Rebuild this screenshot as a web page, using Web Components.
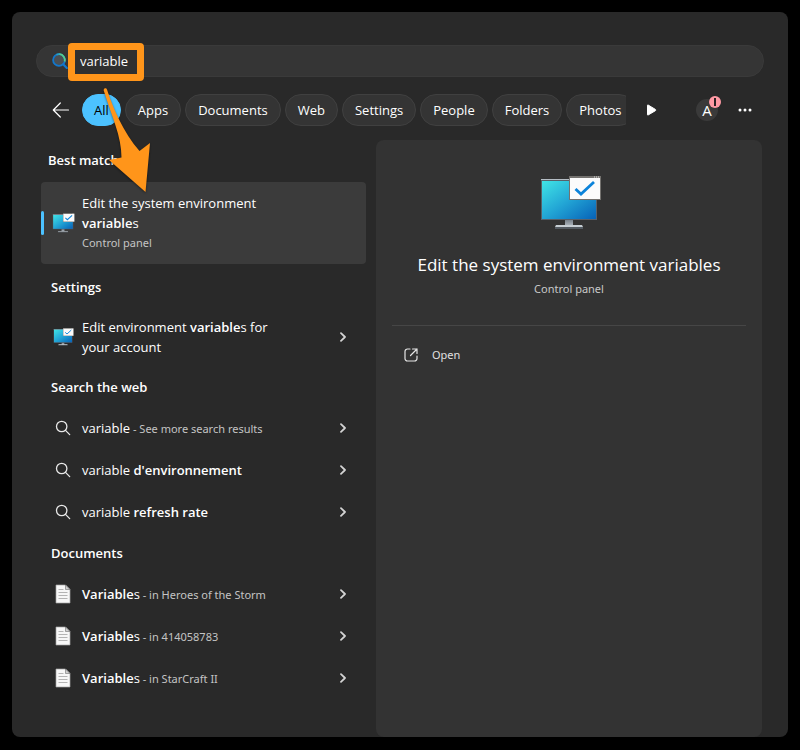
<!DOCTYPE html>
<html lang="en">
<head>
<meta charset="utf-8">
<meta name="viewport" content="width=device-width, initial-scale=1">
<title>Search</title>
<style>
  html { background: #000; }
  body {
    margin: 0;
    min-height: 100vh;
    box-sizing: border-box;
    padding: 12px 12px 13px;
    display: flex;
    background: #000;
    color: #fff;
    font: 13px/20px "Open Sans", "Noto Sans", sans-serif;
    --small-font: "Noto Sans", "Open Sans", sans-serif;
  }
</style>
</head>
<body>
<search-window>
  <search-box slot="search" value="variable"></search-box>
  <filter-bar slot="filters">
    <filter-pill selected>All</filter-pill>
    <filter-pill>Apps</filter-pill>
    <filter-pill>Documents</filter-pill>
    <filter-pill>Web</filter-pill>
    <filter-pill>Settings</filter-pill>
    <filter-pill>People</filter-pill>
    <filter-pill>Folders</filter-pill>
    <filter-pill>Photos</filter-pill>
  </filter-bar>

  <result-group slot="results" heading="Best match" best>
    <result-item icon="monitor" selected>Edit the system environment <b>variable</b>s<span slot="detail">Control panel</span></result-item>
  </result-group>
  <result-group slot="results" heading="Settings">
    <result-item icon="monitor" tall>Edit environment <b>variable</b>s for<br>your account</result-item>
  </result-group>
  <result-group slot="results" heading="Search the web">
    <result-item icon="search">variable<span slot="note"> - See more search results</span></result-item>
    <result-item icon="search">variable <b>d'environnement</b></result-item>
    <result-item icon="search">variable <b>refresh rate</b></result-item>
  </result-group>
  <result-group slot="results" heading="Documents">
    <result-item icon="document"><b>Variable</b>s<span slot="note"> - in Heroes of the Storm</span></result-item>
    <result-item icon="document"><b>Variable</b>s<span slot="note"> - in 414058783</span></result-item>
    <result-item icon="document"><b>Variable</b>s<span slot="note"> - in StarCraft II</span></result-item>
  </result-group>

  <preview-pane slot="preview">
    <span slot="title">Edit the system environment variables</span>
    <span slot="kind">Control panel</span>
    <span slot="action">Open</span>
  </preview-pane>
  <pointer-arrow slot="overlay"></pointer-arrow>
</search-window>

<script>
const ICONS = {
  lens: ['0 0 16 16', `
    <circle cx="7" cy="7" r="5.9" fill="#4a4f54" stroke="#1277cc" stroke-width="1.8"/>
    <path d="M4.5 1.7A5.900 5.900 0 0 1 8 1.200" fill="none" stroke="#2a9fc0" stroke-width="1.8"/>
    <path d="M7.500 1.200A5.900 5.900 0 0 1 12.700 8.500" fill="none" stroke="#55cf8c" stroke-width="1.8"/>
    <path d="M11.4 11.4 14.8 14.9" stroke="#1277cc" stroke-width="2.2" stroke-linecap="round"/>`],
  back: ['0 0 18 16', `<path d="M16.5 8H1.5M8.3 1 1.3 8l7 7" fill="none" stroke="#fff" stroke-width="1.2" stroke-linecap="round" stroke-linejoin="round"/>`],
  play: ['0 0 10 12', `<path d="M1 1.3v9.4c0 .4.3.5.6.3l7.3-4.3c.5-.3.5-1 0-1.3L1.6 1C1.3.8 1 .9 1 1.3z" fill="#fff" stroke="#fff" stroke-linejoin="round"/>`],
  dots: ['0 0 14 4', `<g fill="#fff"><circle cx="2" cy="2" r="1.5"/><circle cx="7" cy="2" r="1.5"/><circle cx="12" cy="2" r="1.5"/></g>`],
  chevron: ['0 0 8 10', `<path d="M2 1.2 6 5 2 8.8" fill="none" stroke="#d4d4d4" stroke-width="1.8" stroke-linecap="round" stroke-linejoin="round"/>`],
  search: ['0 0 16 16', `<circle cx="6.7" cy="6.5" r="5.2" fill="none" stroke="#e8e8e8" stroke-width="1.3"/><path d="M10.5 10.4 14.7 14.6" stroke="#e8e8e8" stroke-width="1.3" stroke-linecap="round"/>`],
  document: ['0 0 16 20', `
    <path d="M1 1h9.5L15 5.5V19H1z" fill="#f7f7f7" stroke="#a5a5a5" stroke-width=".7"/>
    <path d="M10.5 1v4.5H15z" fill="#d0d0d0" stroke="#808080" stroke-width=".7"/>
    <path d="M3.5 5.5h5M3.5 8.5h9M3.5 11.5h9M3.5 14.5h9" stroke="#b4b4b4"/>`],
  monitor: ['-4 0 66 54', `
    <defs><linearGradient id="s" x1="0" y1="0" x2="1" y2="1">
      <stop offset="0" stop-color="#40e4e6"/><stop offset=".5" stop-color="#22a5d5"/><stop offset="1" stop-color="#0762b8"/></linearGradient>
      <linearGradient id="n" x1="0" y1="0" x2="0" y2="1"><stop stop-color="#78818a"/><stop offset="1" stop-color="#b0b8c0"/></linearGradient></defs>
    <path d="M1 3h56v41H1z" fill="#58606a"/>
    <path d="M1 3h56v1H1z" fill="#b5bdc4"/>
    <path d="M2 5h54v38H2z" fill="url(#s)"/>
    <path d="M25 44h8v6h-8z" fill="url(#n)"/>
    <path d="M16 49h26l1 2H15z" fill="#c5cdd3"/><path d="M15 51h28v2H15z" fill="#535a61"/>
    <path d="M29 0h32v24H29z" fill="#74726f"/>
    <path d="M30 2h30v21H30z" fill="#fbfbfb"/>
    <path d="M54 1h1M56 1h1M58 1h1" stroke="#ddd"/>
    <path d="M35.5 13 41 18 54 6" fill="none" stroke="#0b83da" stroke-width="2.8"/>`],
  open: ['0 0 14 14', `<path d="M6 1H3.5A2.5 2.5 0 0 0 1 3.5v7A2.5 2.5 0 0 0 3.5 13h7a2.5 2.5 0 0 0 2.5-2.5V8M8.5 1H13v4.5M13 1 6.5 7.5" fill="none" stroke="#e6e6e6" stroke-width="1.2" stroke-linecap="round" stroke-linejoin="round"/>`]
};

const BUTTON = `button{font:inherit;color:inherit;background:none;border:0;padding:0;margin:0;text-align:left;cursor:pointer}`;

function define(name, render) {
  customElements.define(name, class extends HTMLElement {
    connectedCallback() {
      if (this.shadowRoot) return;
      this.attachShadow({ mode: 'open' }).innerHTML = render(this);
    }
  });
}

define('ui-icon', el => {
  const [box, body] = ICONS[el.getAttribute('name')];
  return `<style>:host{display:block;flex:none}svg{display:block;width:100%;height:100%}</style>
    <svg viewBox="${box}" aria-hidden="true">${body}</svg>`;
});

define('search-window', () => `
  <style>
    :host{flex:1;display:flex;flex-direction:column;position:relative;box-sizing:border-box;
      padding:33px 24px 0;background:#292929;border-radius:8px;min-width:0}
    .filters{margin:17px 0 14px}
    .columns{flex:1;display:grid;grid-template-columns:325fr 386fr;gap:10px;padding:0 2px 0 5px}
    main{min-width:0}
  </style>
  <slot name="search"></slot>
  <div class="filters"><slot name="filters"></slot></div>
  <div class="columns"><main><slot name="results"></slot></main><slot name="preview"></slot></div>
  <slot name="overlay"></slot>`);

define('search-box', el => `
  <style>
    :host{display:block}
    label{display:flex;align-items:center;gap:12px;height:32px;padding:0 15px;box-sizing:border-box;position:relative;
      background:#353535;border:1px solid #3a3a3a;border-radius:16px}
    ui-icon{width:16px;height:16px}
    input{flex:1;min-width:0;background:none;border:0;outline:0;padding:0;color:#fff;font:inherit;position:relative}
    .mark{position:absolute;left:31px;top:-3px;width:76px;height:38px;box-sizing:border-box;
      border:7px solid #ff951a;border-radius:4px;background:#303030;pointer-events:none}
  </style>
  <label><ui-icon name="lens"></ui-icon><span class="mark"></span>
    <input type="text" aria-label="Search" value="${el.getAttribute('value')}"></label>`);

define('filter-bar', () => `
  <style>${BUTTON}
    :host{display:flex;align-items:center;height:32px;padding:0 12px 0 16px}
    .back ui-icon{width:18px;height:16px}
    .back{margin-right:12px}
    nav{display:flex;gap:4px;flex:1;min-width:0;overflow:hidden}
    .next{margin:0 39px 0 20px}
    .next ui-icon{width:11px;height:12px}
    .account{position:relative;width:22px;height:22px;border-radius:50%;background:#3a3a3a;text-align:center;font-size:15px;line-height:22px}
    .badge{position:absolute;right:-3px;top:-3px;width:12px;height:12px;border-radius:50%;background:#ff99a4;
      display:flex;align-items:center;justify-content:center}
    .badge i{width:2px;height:8px;background:#2b2023}
    .more{margin-left:20px}
    .more ui-icon{width:14px;height:4px}
  </style>
  <button class="back" aria-label="Back"><ui-icon name="back"></ui-icon></button>
  <nav><slot></slot></nav>
  <button class="next" aria-label="More filters"><ui-icon name="play"></ui-icon></button>
  <button class="account" aria-label="Account, needs attention">A<span class="badge"><i></i></span></button>
  <button class="more" aria-label="Options"><ui-icon name="dots"></ui-icon></button>`);

define('filter-pill', () => `
  <style>${BUTTON}
    :host{display:block;flex:none}
    button{height:32px;padding:0 12px;border:1px solid #404040;border-radius:16px;background:#343434;white-space:nowrap}
    :host([selected]) button{background:#4cc2ff;border-color:#4cc2ff;color:#000;padding:0 11px}
  </style>
  <button><slot></slot></button>`);

define('result-group', el => `
  <style>
    :host{display:block}
    h2{margin:0;padding:10px;font:inherit;font-weight:600;line-height:20px}
    :host([best]) h2{padding-left:7px}
    :host([best]) .items{padding:2px 0 3px}
  </style>
  <h2>${el.getAttribute('heading')}</h2><div class="items"><slot></slot></div>`);

define('result-item', el => {
  const icon = el.getAttribute('icon');
  const selected = el.hasAttribute('selected');
  const note = el.querySelector('[slot="note"]');
  return `
  <style>${BUTTON}
    :host{display:block}
    ::slotted(b){font-weight:600}
    button{display:flex;align-items:center;width:100%;min-height:42px;padding:10px 19px 10px 11px;box-sizing:border-box;border-radius:4px;position:relative}
    :host([selected]) button{background:#3b3b3b;padding:11px 19px 11px 11px}
    :host([selected]) button::before{content:"";position:absolute;left:0;top:29px;width:3px;height:24px;border-radius:2px;background:#4cc2ff}
    .icon{width:22px;display:flex;justify-content:center;margin-right:8px}
    .monitor{width:22px;height:18px}
    :host([selected]) .monitor{width:24px;height:20px}
    .search{width:16px;height:16px}
    .document{width:16px;height:20px}
    .text{flex:1;min-width:0}
    :host([selected]) .text{padding-right:60px}
    .note,.detail{font-family:var(--small-font);font-size:11px;color:#c4c4c4}
    .note{line-height:1;white-space:pre-wrap}
    .detail{display:block}
    .chevron{width:8px;height:10px}
  </style>
  <button>
    <span class="icon"><ui-icon class="${icon}" name="${icon}"></ui-icon></span>
    <span class="text"><slot></slot>${note ? '<span class="note"><slot name="note"></slot></span>' : ''}${selected ? '<span class="detail"><slot name="detail"></slot></span>' : ''}</span>
    ${selected ? '' : '<ui-icon class="chevron" name="chevron"></ui-icon>'}
  </button>`;
});

define('preview-pane', () => `
  <style>${BUTTON}
    :host{display:flex;flex-direction:column;align-items:center;padding:36px 16px 16px;background:#333;border-radius:8px;min-width:0}
    .art{width:66px;height:54px}
    h1{margin:23px 0 0;font:inherit;font-size:17px;line-height:24px}
    p{margin:2px 0 26px;font-family:var(--small-font);font-size:11px;line-height:20px;color:#c8c8c8}
    .actions{align-self:stretch;border-top:1px solid #464646;padding-top:14px}
    button{display:flex;align-items:center;gap:14px;width:100%;height:30px;padding:0 12px;font-family:var(--small-font);font-size:11px;color:#e0e0e0}
    .open{width:14px;height:14px}
  </style>
  <ui-icon class="art" name="monitor"></ui-icon>
  <h1><slot name="title"></slot></h1>
  <p><slot name="kind"></slot></p>
  <div class="actions"><button><ui-icon class="open" name="open"></ui-icon><slot name="action"></slot></button></div>`);

define('pointer-arrow', () => `
  <style>
    :host{position:absolute;left:88px;top:74px;width:54px;height:110px;pointer-events:none}
    svg{display:block;filter:drop-shadow(0 1px 1px rgba(0,0,0,.45))}
  </style>
  <svg width="54" height="110" viewBox="100 86 54 110" aria-hidden="true">
    <path d="M103.7 90.5C103.5 88 106.4 87.6 107 89.5C113 108 123 132 139.5 151L150 143L145.5 192L109 160L121.5 157.5C121.5 136 112 117 103.7 90.5Z" fill="#ff951a"/>
  </svg>`);
</script>
</body>
</html>
